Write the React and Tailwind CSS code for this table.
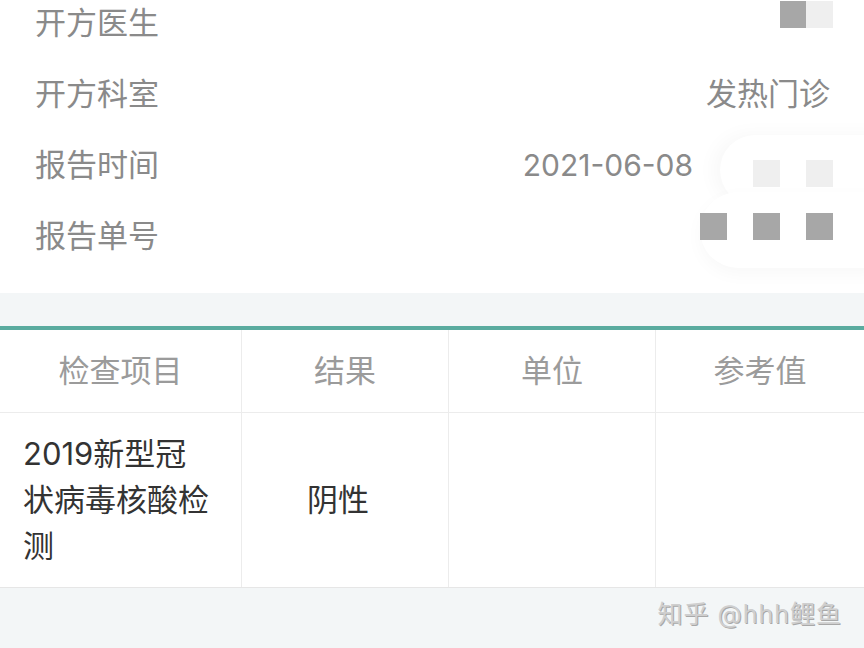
import React from 'react';

const font = { fontFamily: '"Inter", "Noto Sans CJK SC", sans-serif' };

// redaction cells: d = dark, l = light, w = white
const Cells = ({ pattern }) => (
  <div className="flex">
    {pattern.split('').map((c, i) => (
      <div
        key={i}
        className={`w-[26.6px] h-[27px] ${c === 'd' ? 'bg-[#a7a7a7]' : c === 'l' ? 'bg-[#efefef]' : 'bg-transparent'}`}
      />
    ))}
  </div>
);

const InfoRow = ({ label, children }) => (
  <div className="h-[71px] flex items-center justify-between pl-[35px] pr-[31px]">
    <span className="text-[31px] text-[#8a8a8a] leading-none">{label}</span>
    {children}
  </div>
);

export default function App() {
  return (
    <div className="w-[864px] h-[648px] overflow-hidden bg-[#f3f6f7]" style={font}>
      <div className="bg-white -mt-[13px] pb-[22px] relative">
        <div className="absolute left-[720px] top-[148px] w-[190px] h-[70px] rounded-full bg-white shadow-[-6px_0_20px_rgba(0,0,0,0.035)]" />
        <div className="absolute left-[700px] top-[205px] w-[200px] h-[76px] rounded-[38px] bg-white shadow-[0_6px_18px_rgba(0,0,0,0.03)]" />
        <div className="relative">
          <InfoRow label="开方医生">
            <div className="-mt-[16px]">
              <Cells pattern="dl" />
            </div>
          </InfoRow>
          <InfoRow label="开方科室">
            <span className="text-[31px] text-[#8a8a8a] leading-none pr-[3px]">发热门诊</span>
          </InfoRow>
          <InfoRow label="报告时间">
            <div className="flex items-center gap-[7px]">
              <span className="text-[30px] text-[#8a8a8a] leading-none">2021-06-08</span>
              <div className="pt-[18px]">
                <Cells pattern="wwlwl" />
              </div>
            </div>
          </InfoRow>
          <InfoRow label="报告单号">
            <div className="-mt-[18px]">
              <Cells pattern="dwdwd" />
            </div>
          </InfoRow>
        </div>
      </div>

      <div className="h-[33px]" />
      <div className="h-[4px] bg-[#5aab9f]" />

      <div className="bg-white">
        <div className="grid grid-cols-[241px_207px_207px_209px] border-b border-[#ececec]">
          {['检查项目', '结果', '单位', '参考值'].map((h, i) => (
            <div
              key={h}
              className={`h-[82px] flex items-center justify-center text-[31px] text-[#9b9b9b] ${i > 0 ? 'border-l border-[#ececec]' : ''}`}
            >
              {h}
            </div>
          ))}
        </div>
        <div className="grid grid-cols-[241px_207px_207px_209px] border-b border-[#e6e6e6]">
          <div className="h-[174px] flex flex-col justify-center pl-[23px] text-[31px] leading-[46px] text-[#333]">
            <span>2019新型冠</span>
            <span>状病毒核酸检</span>
            <span>测</span>
          </div>
          <div className="flex items-center justify-center pr-[14px] border-l border-[#ececec] text-[31px] text-[#333]">
            阴性
          </div>
          <div className="border-l border-[#ececec]" />
          <div className="border-l border-[#ececec]" />
        </div>
      </div>

      <div className="flex justify-end pr-[22px] pt-[8px]">
        <span className="text-[25px] tracking-[1px] text-[#cfcfcf] [text-shadow:1px_1px_0_#a8a8a8]">知乎 @hhh鲤鱼</span>
      </div>
    </div>
  );
}
